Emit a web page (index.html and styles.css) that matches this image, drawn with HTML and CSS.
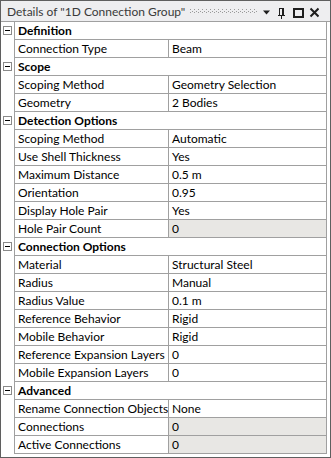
FILE: index.html
```html
<!DOCTYPE html>
<html lang="en">
<head>
    <meta charset="UTF-8">
    <link rel="stylesheet" href="styles.css">
    <title>Details of "1D Connection Group"</title>
</head>
<body>
    <div class="panel">
        <div class="titlebar">
            <span class="title">Details of "1D Connection Group"</span>
            <svg class="grip" height="5">
                <defs>
                    <pattern id="dots" width="4" height="3" patternUnits="userSpaceOnUse">
                        <rect x="0" y="0" width="1" height="1" fill="#9a9a9a"/>
                        <rect x="2" y="2" width="1" height="1" fill="#9a9a9a"/>
                    </pattern>
                </defs>
                <rect width="100%" height="5" fill="url(#dots)"/>
            </svg>
            <svg class="tools" width="56" height="20" viewBox="0 0 56 20">
                <!-- dropdown -->
                <polygon points="0,9.5 7,9.5 3.5,13.5" fill="#1e1e1e"/>
                <!-- pin -->
                <path d="M16 7h5v7h-5z M17 8v6h2v-6z" fill="#1e1e1e" fill-rule="evenodd"/>
                <rect x="15" y="14" width="7" height="1" fill="#1e1e1e"/>
                <rect x="18" y="15" width="1" height="3" fill="#1e1e1e"/>
                <!-- maximize -->
                <path d="M30 7h11v10h-11z M32 9h7v6h-7z" fill="#1e1e1e" fill-rule="evenodd"/>
                <!-- close -->
                <path d="M47.5 7.5l8 8 M55.5 7.5l-8 8" stroke="#1e1e1e" stroke-width="2"/>
            </svg>
        </div>

        <div class="grid">
            <div class="row cat"><div class="gutter"><span class="toggle"></span></div><div class="name">Definition</div></div>
            <div class="row"><div class="gutter"></div><div class="name">Connection Type</div><div class="value">Beam</div></div>

            <div class="row cat"><div class="gutter"><span class="toggle"></span></div><div class="name">Scope</div></div>
            <div class="row"><div class="gutter"></div><div class="name">Scoping Method</div><div class="value">Geometry Selection</div></div>
            <div class="row"><div class="gutter"></div><div class="name">Geometry</div><div class="value">2 Bodies</div></div>

            <div class="row cat"><div class="gutter"><span class="toggle"></span></div><div class="name">Detection Options</div></div>
            <div class="row"><div class="gutter"></div><div class="name">Scoping Method</div><div class="value">Automatic</div></div>
            <div class="row"><div class="gutter"></div><div class="name">Use Shell Thickness</div><div class="value">Yes</div></div>
            <div class="row"><div class="gutter"></div><div class="name">Maximum Distance</div><div class="value">0.5 m</div></div>
            <div class="row"><div class="gutter"></div><div class="name">Orientation</div><div class="value">0.95</div></div>
            <div class="row"><div class="gutter"></div><div class="name">Display Hole Pair</div><div class="value">Yes</div></div>
            <div class="row"><div class="gutter"></div><div class="name">Hole Pair Count</div><div class="value readonly">0</div></div>

            <div class="row cat"><div class="gutter"><span class="toggle"></span></div><div class="name">Connection Options</div></div>
            <div class="row"><div class="gutter"></div><div class="name">Material</div><div class="value">Structural Steel</div></div>
            <div class="row"><div class="gutter"></div><div class="name">Radius</div><div class="value">Manual</div></div>
            <div class="row"><div class="gutter"></div><div class="name">Radius Value</div><div class="value">0.1 m</div></div>
            <div class="row"><div class="gutter"></div><div class="name">Reference Behavior</div><div class="value">Rigid</div></div>
            <div class="row"><div class="gutter"></div><div class="name">Mobile Behavior</div><div class="value">Rigid</div></div>
            <div class="row"><div class="gutter"></div><div class="name">Reference Expansion Layers</div><div class="value">0</div></div>
            <div class="row"><div class="gutter"></div><div class="name">Mobile Expansion Layers</div><div class="value">0</div></div>

            <div class="row cat"><div class="gutter"><span class="toggle"></span></div><div class="name">Advanced</div></div>
            <div class="row"><div class="gutter"></div><div class="name">Rename Connection Objects</div><div class="value">None</div></div>
            <div class="row"><div class="gutter"></div><div class="name">Connections</div><div class="value readonly">0</div></div>
            <div class="row"><div class="gutter"></div><div class="name">Active Connections</div><div class="value readonly">0</div></div>
        </div>
    </div>
</body>
</html>
```

FILE: styles.css
```css
body {
    margin: 0;
    font-family: Lato, "Liberation Sans", sans-serif;
    font-size: 12px;
    color: #000;
    background: #fff;
}

.panel {
    width: 331px;
    height: 458px;
    box-sizing: border-box;
    border: 1px solid #5f5f5f;
    background: #fff;
    overflow: hidden;
}

.titlebar {
    display: flex;
    align-items: center;
    height: 20px;
    border-bottom: 1px solid #a0a0a0;
    background: #eeeef0;
}

.title {
    padding-left: 6px;
    font-size: 12px;
    color: #3a3a3a;
    white-space: nowrap;
}

.grip {
    flex: 1;
    margin: 1px 5px 0 5px;
}

.tools {
    margin-right: 11px;
    flex-shrink: 0;
}

.grid {
    width: 326px;
}

.row {
    display: flex;
    height: 18px;
}

.gutter {
    width: 13px;
    flex-shrink: 0;
    border-right: 1px solid #a0a0a0;
    position: relative;
}

.name,
.value {
    box-sizing: border-box;
    height: 18px;
    line-height: 17px;
    padding-left: 3px;
    border-right: 1px solid #a0a0a0;
    border-bottom: 1px solid #a0a0a0;
    white-space: nowrap;
    overflow: hidden;
}

.name {
    width: 154px;
}

.value {
    width: 158px;
}

.readonly {
    background: #e8e7e4;
}

.cat .name {
    width: 312px;
    font-weight: bold;
}

.toggle {
    position: absolute;
    left: 2px;
    top: 4px;
    width: 7px;
    height: 7px;
    border: 1px solid #8a8a8a;
    background: #fff;
}

.toggle::after {
    content: "";
    position: absolute;
    left: 1px;
    top: 3px;
    width: 5px;
    height: 1px;
    background: #000;
}
```
